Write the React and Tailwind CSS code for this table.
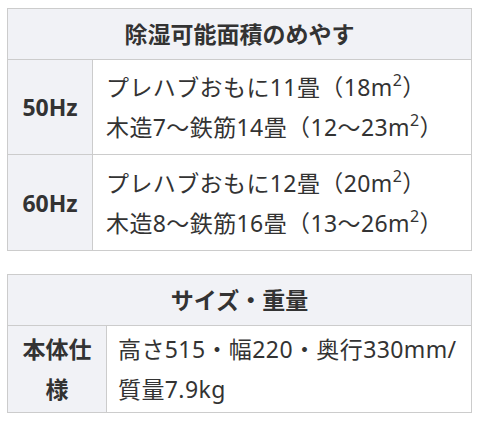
export default function App() {
  const font = { fontFamily: '"Noto Sans", "Noto Sans CJK JP", sans-serif' };
  const sup = <sup className="text-[16px] align-super leading-none relative -top-[1px]">2</sup>;
  return (
    <div className="w-[489px] h-[423px] bg-white text-[#333] pl-[7px] pt-[8px]" style={font}>
      <table className="w-[465px] border-collapse text-[23px] leading-[40px] table-fixed">
        <colgroup>
          <col className="w-[85px]" />
          <col />
        </colgroup>
        <tbody>
          <tr className="h-[51px]">
            <th colSpan={2} className="border border-[#cccccc] bg-[#f1f2f6] font-bold text-center">
              除湿可能面積のめやす
            </th>
          </tr>
          <tr className="h-[95px]">
            <th className="border border-[#cccccc] bg-[#f1f2f6] font-bold text-center">50Hz</th>
            <td className="border border-[#cccccc] px-[13px] font-normal tracking-[0.4px]">
              <div>プレハブおもに11畳（18m{sup}）</div>
              <div>木造7〜鉄筋14畳（12〜23m{sup}）</div>
            </td>
          </tr>
          <tr className="h-[96px]">
            <th className="border border-[#cccccc] bg-[#f1f2f6] font-bold text-center">60Hz</th>
            <td className="border border-[#cccccc] px-[13px] font-normal tracking-[0.4px]">
              <div>プレハブおもに12畳（20m{sup}）</div>
              <div>木造8〜鉄筋16畳（13〜26m{sup}）</div>
            </td>
          </tr>
        </tbody>
      </table>

      <table className="mt-[23px] w-[465px] border-collapse text-[23px] leading-[40px] table-fixed">
        <colgroup>
          <col className="w-[99px]" />
          <col />
        </colgroup>
        <tbody>
          <tr className="h-[51px]">
            <th colSpan={2} className="border border-[#cccccc] bg-[#f1f2f6] font-bold text-center">
              サイズ・重量
            </th>
          </tr>
          <tr className="h-[87px]">
            <th className="border border-[#cccccc] bg-[#f1f2f6] font-bold text-center px-[12px]">本体仕様</th>
            <td className="border border-[#cccccc] px-[11px] font-normal tracking-[0.4px]">
              高さ515・幅220・奥行330mm/
              <br />
              質量7.9kg
            </td>
          </tr>
        </tbody>
      </table>
    </div>
  );
}
